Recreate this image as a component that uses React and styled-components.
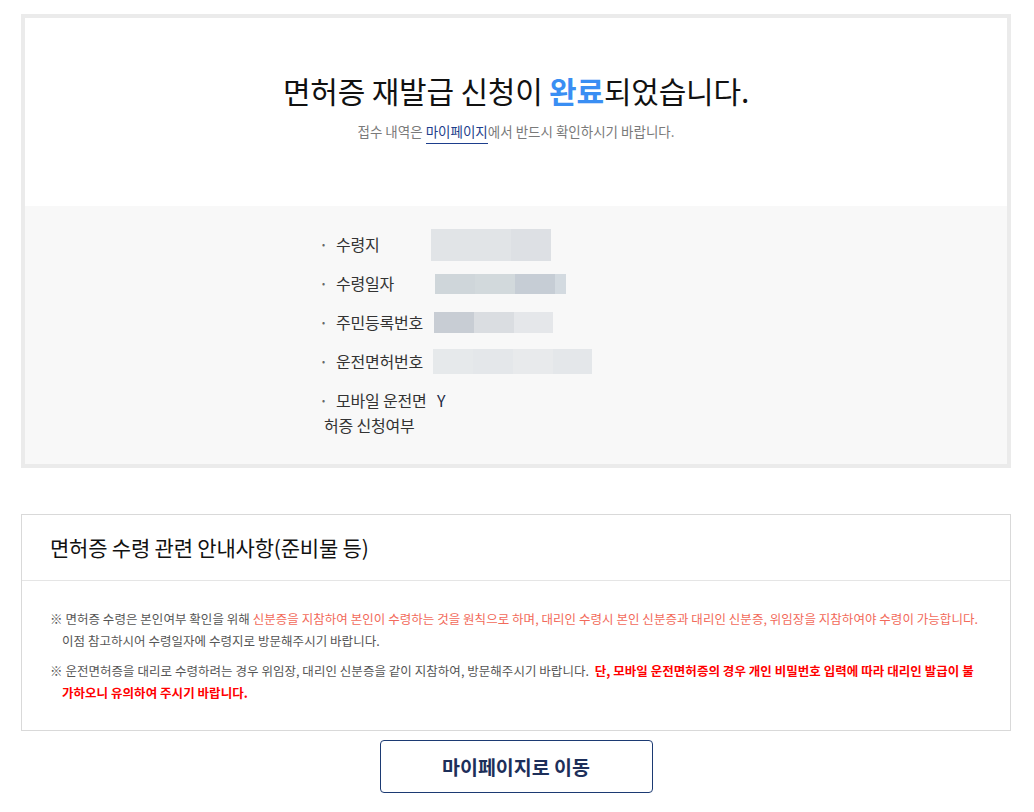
import React from "react";
import styled, { createGlobalStyle } from "styled-components";

const GlobalStyle = createGlobalStyle`
  html, body { margin: 0; padding: 0; background: #fff; }
  body {
    font-family: "Noto Sans CJK KR", "Noto Sans", sans-serif;
    color: #333;
  }
  * { box-sizing: border-box; }
`;

const Page = styled.div`
  width: 990px;
  margin-left: 21px;
  padding-top: 14px;
  padding-bottom: 18px;
`;

const ResultBox = styled.section`
  border: 4px solid #ebebeb;
  background: #fff;
`;

const ResultHead = styled.div`
  height: 188px;
  display: flex;
  flex-direction: column;
  align-items: center;
  padding-top: 50px;
`;

const Title = styled.h1`
  margin: 0;
  font-size: 30px;
  font-weight: 400;
  line-height: 44px;
  letter-spacing: -0.2px;
  color: #111;
`;

const Accent = styled.strong`
  font-weight: 700;
  color: #3a8ef3;
`;

const Sub = styled.p`
  margin: 9px 0 0;
  font-size: 13.5px;
  line-height: 20px;
  letter-spacing: 0;
  color: #7a7a7a;
`;

const SubLink = styled.a`
  color: #1d3e8c;
  text-decoration: none;
  border-bottom: 1px solid #1d3e8c;
  padding-bottom: 2px;
`;

const InfoArea = styled.div`
  background: #f8f8f8;
  padding: 19px 0 19px;
  display: flex;
  justify-content: center;
`;

const InfoList = styled.dl`
  margin: 0 0 0 -12px;
  width: 372px;
`;

const Row = styled.div`
  display: flex;
  align-items: flex-start;
  padding: 7px 0;
`;

const Label = styled.dt`
  width: 107px;
  flex: none;
  font-size: 16px;
  line-height: 25px;
  letter-spacing: -0.2px;
  color: #333;
`;

const Dot = styled.span`
  display: inline-block;
  width: 14px;
  margin-left: -2px;
  font-size: 9px;
  color: #666;
  vertical-align: top;
`;

const Value = styled.dd`
  margin: 0 0 0 ${(p) => p.$offset || 0}px;
  font-size: 16px;
  line-height: 25px;
  color: #1f2a44;
`;

const Mosaic = styled.dd`
  margin: ${(p) => (25 - p.$h) / 2}px 0 ${(p) => (25 - p.$h) / 2}px ${(p) => p.$offset || 0}px;
  display: flex;
  height: ${(p) => p.$h}px;
`;

const Cell = styled.span`
  display: block;
  height: 100%;
  background: ${(p) => p.$c};
  width: ${(p) => p.$w || 40}px;
`;

const NoticeBox = styled.section`
  margin-top: 46px;
  border: 1px solid #d9d9d9;
  background: #fff;
`;

const NoticeHead = styled.h2`
  margin: 0;
  height: 66px;
  display: flex;
  align-items: center;
  padding: 0 0 2px 28px;
  font-size: 21px;
  font-weight: 400;
  letter-spacing: -0.2px;
  color: #111;
  border-bottom: 1px solid #e5e5e5;
`;

const NoticeBody = styled.div`
  padding: 27px 30px 26px 28px;
`;

const Note = styled.p`
  margin: 0 0 8px;
  padding-left: 12px;
  text-indent: -12px;
  font-size: 12.5px;
  line-height: 22px;
  letter-spacing: 0.04px;
  color: #555;
  &:last-child { margin-bottom: 0; }
`;

const Warn = styled.span`
  color: #f26a5a;
`;

const Strong = styled.strong`
  color: #ff0000;
  font-weight: 700;
`;

const ButtonRow = styled.div`
  display: flex;
  justify-content: center;
  margin-top: 9px;
`;

const MoveButton = styled.button`
  width: 273px;
  height: 53px;
  border: 1px solid #1c3a73;
  border-radius: 4px;
  background: #fff;
  font-family: inherit;
  font-size: 19.5px;
  font-weight: 700;
  letter-spacing: 0;
  color: #1d2f5a;
  cursor: pointer;
`;

const rows = [
  { label: "수령지", offset: 0, h: 32, cells: ["#e1e4e7", "#e1e4e7", "#dde0e4"], widths: [40, 40, 40] },
  { label: "수령일자", offset: 4, h: 20, cells: ["#cfd6da", "#d2d9dc", "#c6cdd5", "#d3dae0"], widths: [40, 40, 40, 11] },
  { label: "주민등록번호", offset: 3, h: 21, cells: ["#c8cdd4", "#dadde1", "#e5e7ea"], widths: [40, 40, 39] },
  { label: "운전면허번호", offset: 2, h: 25, cells: ["#e6e9eb", "#e4e7ea", "#e8eaec", "#e4e7ea"], widths: [40, 40, 40, 39] },
];

export default function App() {
  return (
    <>
      <GlobalStyle />
      <Page>
        <ResultBox>
          <ResultHead>
            <Title>
              면허증 재발급 신청이 <Accent>완료</Accent>되었습니다.
            </Title>
            <Sub>
              접수 내역은 <SubLink href="#">마이페이지</SubLink>에서 반드시 확인하시기 바랍니다.
            </Sub>
          </ResultHead>
          <InfoArea>
            <InfoList>
              {rows.map((r) => (
                <Row key={r.label}>
                  <Label>
                    <Dot>•</Dot>
                    {r.label}
                  </Label>
                  <Mosaic $offset={r.offset} $h={r.h}>
                    {r.cells.map((c, i) => (
                      <Cell key={i} $c={c} $w={r.widths[i]} />
                    ))}
                  </Mosaic>
                </Row>
              ))}
              <Row>
                <Label>
                  <Dot>•</Dot>
                  모바일 운전면허증 신청여부
                </Label>
                <Value $offset={6}>Y</Value>
              </Row>
            </InfoList>
          </InfoArea>
        </ResultBox>

        <NoticeBox>
          <NoticeHead>면허증 수령 관련 안내사항(준비물 등)</NoticeHead>
          <NoticeBody>
            <Note>
              ※ 면허증 수령은 본인여부 확인을 위해{" "}
              <Warn>
                신분증을 지참하여 본인이 수령하는 것을 원칙으로 하며, 대리인 수령시 본인 신분증과 대리인 신분증, 위임장을 지참하여야 수령이 가능합니다.
              </Warn>
              <br />
              이점 참고하시어 수령일자에 수령지로 방문해주시기 바랍니다.
            </Note>
            <Note>
              ※ 운전면허증을 대리로 수령하려는 경우 위임장, 대리인 신분증을 같이 지참하여, 방문해주시기 바랍니다.&nbsp;{" "}
              <Strong>
                단, 모바일 운전면허증의 경우 개인 비밀번호 입력에 따라 대리인 발급이 불가하오니 유의하여 주시기 바랍니다.
              </Strong>
            </Note>
          </NoticeBody>
        </NoticeBox>

        <ButtonRow>
          <MoveButton type="button">마이페이지로 이동</MoveButton>
        </ButtonRow>
      </Page>
    </>
  );
}
